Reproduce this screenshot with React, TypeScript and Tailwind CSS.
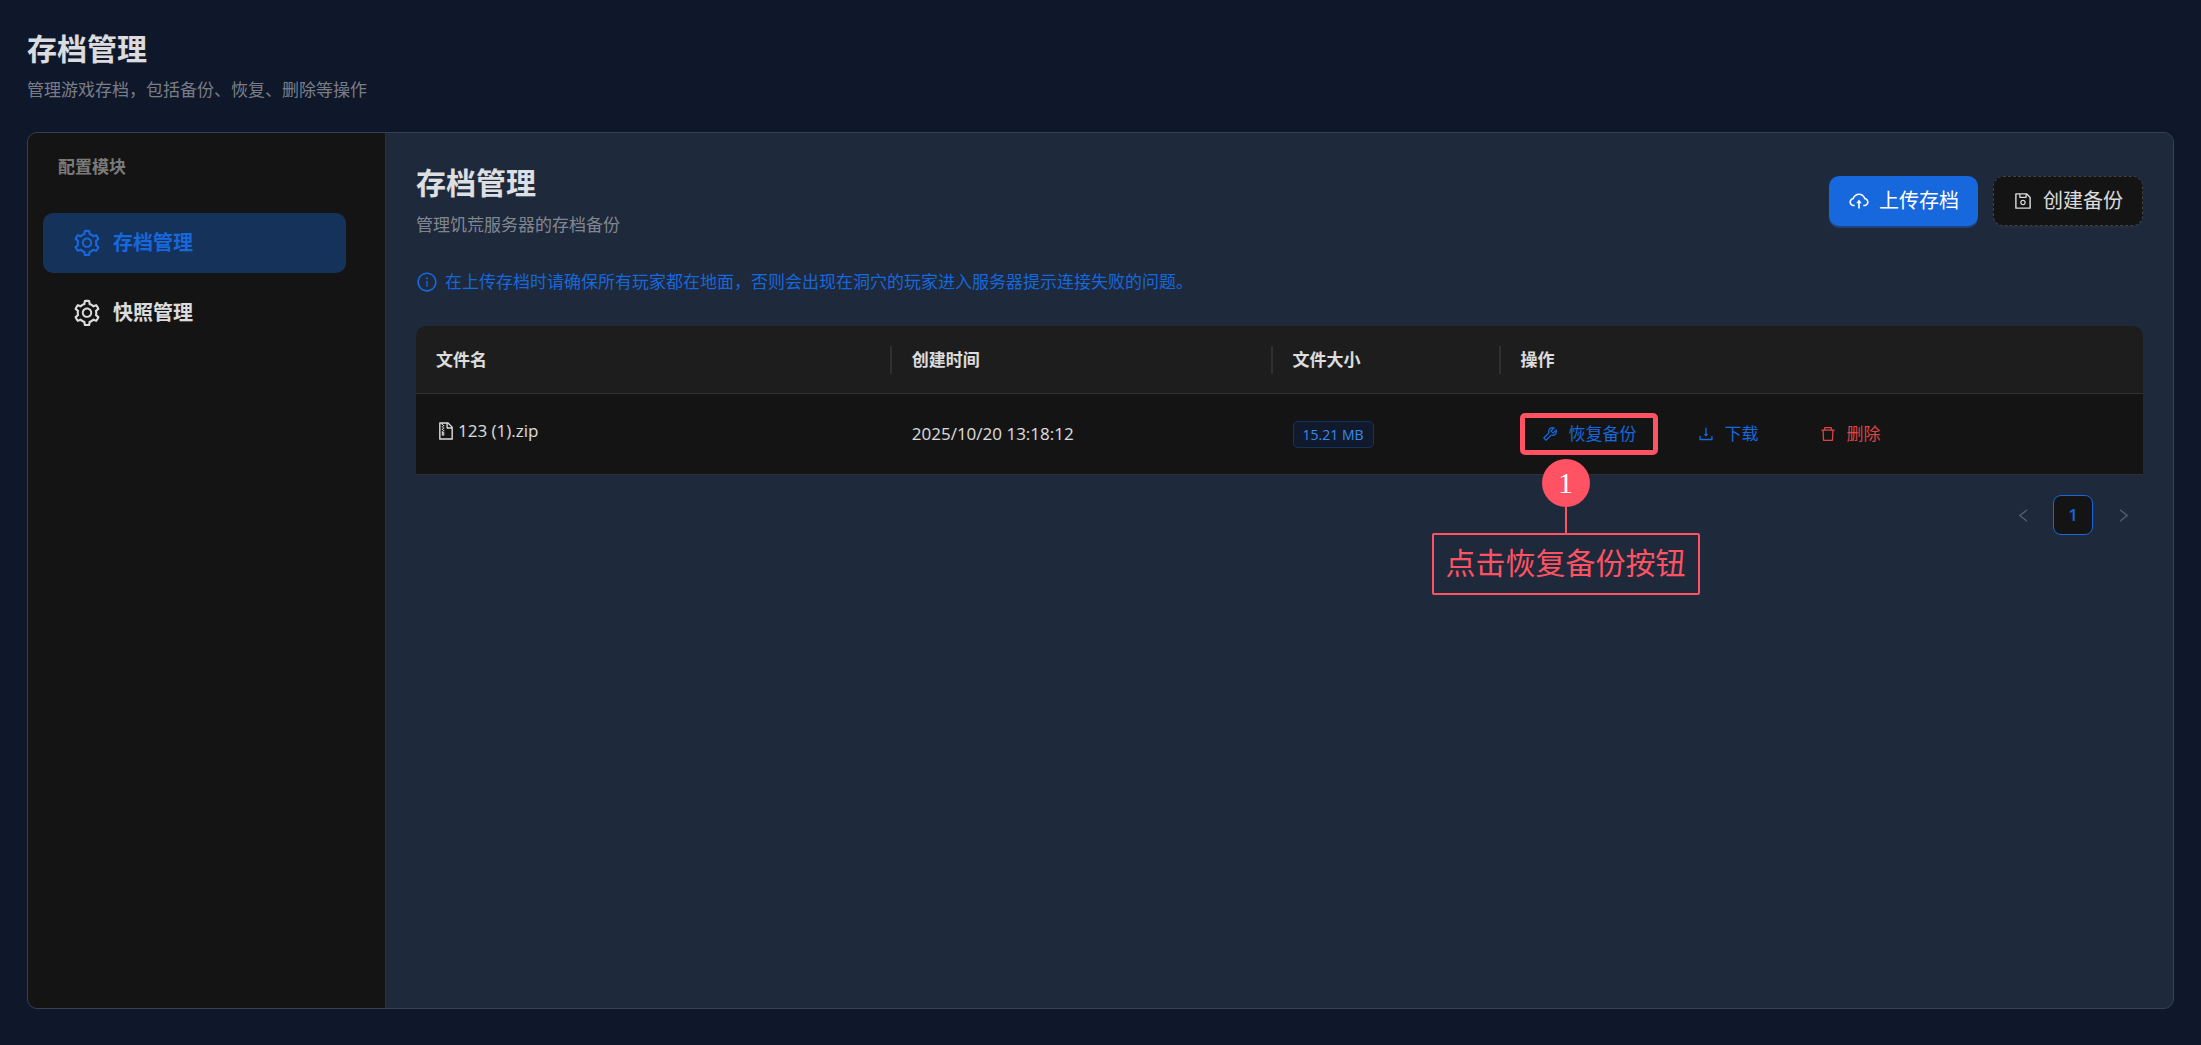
import { useState } from "react";
import type { ReactNode } from "react";
import {
  AiOutlineCloudUpload,
  AiOutlineDelete,
  AiOutlineDownload,
  AiOutlineFileZip,
  AiOutlineInfoCircle,
  AiOutlineLeft,
  AiOutlineRight,
  AiOutlineSave,
  AiOutlineSetting,
  AiOutlineTool,
} from "react-icons/ai";

interface Backup {
  fileName: string;
  createdAt: string;
  size: string;
}

const MODULES = ["存档管理", "快照管理"];

const COLUMNS = [
  { title: "文件名", width: "w-[27.55%]" },
  { title: "创建时间", width: "w-[22.05%]" },
  { title: "文件大小", width: "w-[13.2%]" },
  { title: "操作", width: "" },
];

const BACKUPS: Backup[] = [
  { fileName: "123 (1).zip", createdAt: "2025/10/20 13:18:12", size: "15.21 MB" },
];

export default function App() {
  const [activeModule, setActiveModule] = useState(MODULES[0]);

  return (
    <div className="flex min-h-screen flex-col bg-[#0f172a] px-[27px] pt-[29px] pb-9 font-['Open_Sans','Noto_Sans_CJK_SC',sans-serif] text-[17px] leading-7 text-white/85">
      <header className="mb-7">
        <h1 className="text-[30px] leading-10 font-bold">存档管理</h1>
        <p className="mt-[7px] text-white/45">管理游戏存档，包括备份、恢复、删除等操作</p>
      </header>

      <div className="flex flex-1 rounded-[10px] border border-[#334155] bg-[#1e293b]">
        <aside className="w-[358px] shrink-0 rounded-l-[9px] border-r border-[#303030] bg-[#141414] pt-5">
          <h2 className="pl-[30px] font-bold text-white/45">配置模块</h2>
          <nav className="mt-8 flex flex-col gap-[10px] pr-[39px] pl-[15px]">
            {MODULES.map((name) => (
              <button
                key={name}
                type="button"
                onClick={() => setActiveModule(name)}
                className={`flex h-[60px] cursor-pointer items-center gap-[11px] rounded-[10px] pl-[29px] text-xl font-bold ${
                  name === activeModule ? "bg-[#15325b] text-[#1668dc]" : "text-white/85"
                }`}
              >
                <AiOutlineSetting className="h-[30px] w-[30px]" />
                {name}
              </button>
            ))}
          </nav>
        </aside>

        <main className="min-w-0 flex-1 p-[30px]">
          <div className="flex items-center justify-between">
            <div>
              <h2 className="text-[30px] leading-10 font-bold">存档管理</h2>
              <p className="mt-2 text-white/45">管理饥荒服务器的存档备份</p>
            </div>
            <div className="flex gap-[15px]">
              <button
                type="button"
                className="flex h-[50px] cursor-pointer items-center gap-[9px] rounded-[10px] bg-[#1668dc] px-[19px] text-xl text-white shadow-[0_2px_0_#1b437f]"
              >
                <AiOutlineCloudUpload className="h-[22px] w-[22px]" />
                上传存档
              </button>
              <button
                type="button"
                className="flex h-[50px] cursor-pointer items-center gap-[10px] rounded-[10px] border border-dashed border-[#424242] bg-[#141414] px-[19px] text-xl shadow-[0_2px_0_#232e40]"
              >
                <AiOutlineSave className="h-5 w-5" />
                创建备份
              </button>
            </div>
          </div>

          <p className="mt-[29px] flex items-center gap-[7px] text-[#1668dc]">
            <AiOutlineInfoCircle className="h-[22px] w-[22px]" />
            在上传存档时请确保所有玩家都在地面，否则会出现在洞穴的玩家进入服务器提示连接失败的问题。
          </p>

          <BackupTable />
          <Pagination />
        </main>
      </div>
    </div>
  );
}

function BackupTable() {
  return (
    <table className="mt-[30px] w-full table-fixed border-separate border-spacing-0 text-left">
      <thead>
        <tr>
          {COLUMNS.map((column, index) => (
            <th
              key={column.title}
              scope="col"
              className={`${column.width} h-[68px] border-b border-[#303030] bg-[#1d1d1d] p-0 font-bold first:rounded-tl-[10px] last:rounded-tr-[10px]`}
            >
              <div
                className={`h-7 pl-5 ${index < COLUMNS.length - 1 ? "border-r-2 border-[#303030]" : ""}`}
              >
                {column.title}
              </div>
            </th>
          ))}
        </tr>
      </thead>
      <tbody>
        {BACKUPS.map((backup) => (
          <tr key={backup.fileName} className="[&>td]:h-[81px] [&>td]:border-b [&>td]:border-[#303030] [&>td]:bg-[#141414] [&>td]:pl-5">
            <td>
              <div className="flex items-center gap-[2px] pb-[6px]">
                <AiOutlineFileZip className="h-5 w-5" />
                {backup.fileName}
              </div>
            </td>
            <td>{backup.createdAt}</td>
            <td>
              <span className="inline-block rounded-[5px] border border-[#15325b] bg-[#111a2c] px-[9px] text-sm leading-[25px] text-[#3c89e8]">
                {backup.size}
              </span>
            </td>
            <td>
              <div className="flex gap-5">
                <div className="relative">
                  <ActionButton icon={<AiOutlineTool />} label="恢复备份" />
                  <RestoreHint />
                </div>
                <ActionButton icon={<AiOutlineDownload />} label="下载" />
                <ActionButton icon={<AiOutlineDelete />} label="删除" danger />
              </div>
            </td>
          </tr>
        ))}
      </tbody>
    </table>
  );
}

function ActionButton({
  icon,
  label,
  danger = false,
}: {
  icon: ReactNode;
  label: string;
  danger?: boolean;
}) {
  return (
    <button
      type="button"
      className={`flex h-10 cursor-pointer items-center gap-[10px] px-5 [&>svg]:h-[18px] [&>svg]:w-[18px] ${
        danger ? "text-[#dc4446]" : "text-[#1668dc]"
      }`}
    >
      {icon}
      {label}
    </button>
  );
}

// Highlight frame around the restore button, with the step number and its note below
function RestoreHint() {
  return (
    <div className="pointer-events-none absolute -inset-x-px -inset-y-px rounded-[5px] border-[5px] border-[#ff5263]">
      <div className="absolute top-[41px] left-[41px] flex -translate-x-1/2 flex-col items-center text-[#ff5263]">
        <span className="flex h-12 w-12 items-center justify-center rounded-full bg-[#ff5263] font-['Liberation_Serif',serif] text-[30px] text-white">
          1
        </span>
        <span className="h-[26px] w-[2px] bg-[#ff5263]" />
        <p className="rounded-[2px] border-2 border-[#ff5263] px-3 pt-[6px] pb-2 text-[30px] leading-11 whitespace-nowrap">
          点击恢复备份按钮
        </p>
      </div>
    </div>
  );
}

function Pagination() {
  return (
    <nav aria-label="分页" className="mt-5 flex justify-end gap-[10px]">
      <button
        type="button"
        disabled
        aria-label="上一页"
        className="flex h-10 w-10 items-center justify-center text-white/25"
      >
        <AiOutlineLeft className="h-[17px] w-[17px]" />
      </button>
      <button
        type="button"
        aria-current="page"
        className="h-10 w-10 cursor-pointer rounded-[8px] border border-[#1668dc] bg-[#141414] font-semibold text-[#1668dc]"
      >
        1
      </button>
      <button
        type="button"
        disabled
        aria-label="下一页"
        className="flex h-10 w-10 items-center justify-center text-white/25"
      >
        <AiOutlineRight className="h-[17px] w-[17px]" />
      </button>
    </nav>
  );
}
